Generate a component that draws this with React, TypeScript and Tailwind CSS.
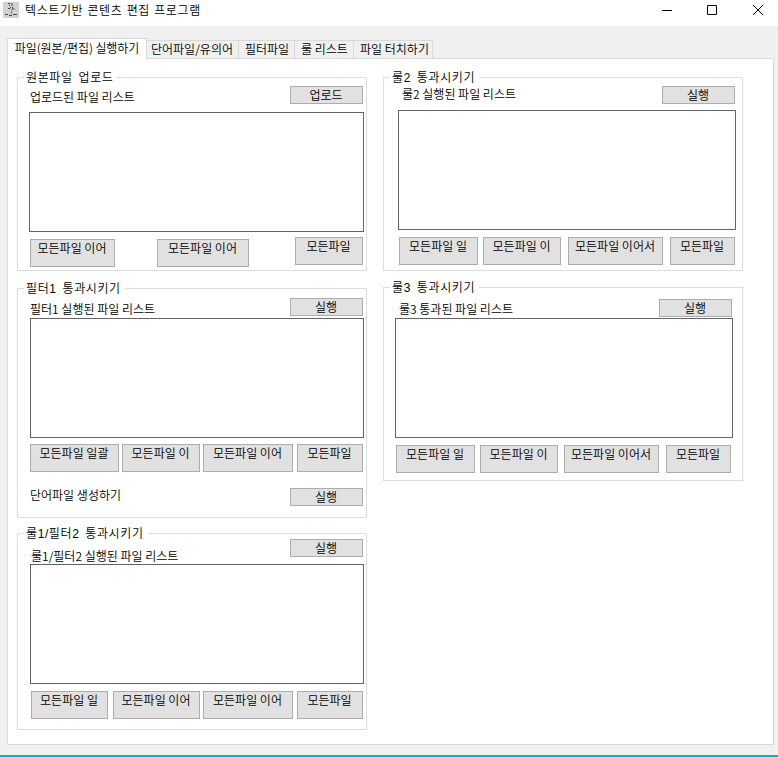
import type { ReactNode } from "react";

function Button({ className, children }: { className: string; children: ReactNode }) {
  return (
    <button
      className={`block shrink-0 border border-[#adadad] bg-[#e1e1e1] pr-px text-center whitespace-nowrap ${className}`}
    >
      {children}
    </button>
  );
}

function Run({ className = "", children = "실행" }: { className?: string; children?: ReactNode }) {
  return <Button className={`h-[18px] w-[73px] leading-[16px] ${className}`}>{children}</Button>;
}

function Batch({ className, children }: { className: string; children: ReactNode }) {
  return <Button className={`h-7 pb-[10px] leading-[16px] ${className}`}>{children}</Button>;
}

function Group({ title, gap, className, children }: { title: string; gap: string; className: string; children: ReactNode }) {
  return (
    <section className={`border border-[#dcdcdc] ${className}`}>
      <h2
        className={`-mt-[7px] ml-[6px] h-[14px] bg-white pl-[2px] font-['Liberation_Sans','Noto_Sans_CJK_KR',sans-serif] text-[12px] leading-[14px] tracking-[0.6px] whitespace-nowrap [word-spacing:2px] ${gap}`}
      >
        {title}
      </h2>
      {children}
    </section>
  );
}

function FileList({ className }: { className: string }) {
  return <div className={`h-[120px] border border-[#646464] bg-white ${className}`} />;
}

function Label({ className = "", children }: { className?: string; children: ReactNode }) {
  return <span className={`h-[14px] leading-[14px] whitespace-nowrap ${className}`}>{children}</span>;
}

const tab = "h-[18px] border-t border-r border-[#d9d9d9] text-center leading-[16px] whitespace-nowrap";

export default function App() {
  return (
    <div className="flex h-[757px] w-[778px] flex-col overflow-hidden border-b-2 border-[#0aaccf] bg-[#f0f0f0] font-['Noto_Sans_CJK_KR',sans-serif] text-[12px] font-[350] text-black">
      <header className="flex h-[26px] shrink-0 items-start bg-white">
        <svg className="mt-[2px] ml-[3px]" width="16" height="16" viewBox="0 0 16 16">
          <rect width="16" height="16" fill="#d2d2d2" />
          <path d="M5 1.5h2M6 3.5h1M9 1v3M5 6.5h2M7 5.500h1M9.500 5v2h2M2 12.500h3M6 13.500h3M10 12.500h4" stroke="#444" fill="none" />
          <path d="M8.500 7v5" stroke="#c87860" />
        </svg>
        <h1 className="ml-[6px] pt-[2px] text-[12px] leading-[16px] tracking-[0.6px] [word-spacing:1px]">
          텍스트기반 콘텐츠 편집 프로그램
        </h1>
        <svg className="mt-[5px] mr-[15px] ml-auto" width="101" height="10" viewBox="0 0 101 10" fill="none" stroke="#000">
          <path d="M0 5.5h10M45.5.5h9v9h-9zM91 0l10 10M101 0l-10 10" />
        </svg>
      </header>

      <nav className="z-10 mt-3 -mb-px flex h-[21px] shrink-0 items-end pl-[7px]">
        <div className="h-[21px] w-[140px] border border-b-0 border-[#d9d9d9] bg-white text-center leading-[17px] tracking-[-0.1px] whitespace-nowrap">
          파일(원본/편집) 실행하기
        </div>
        <div className="mb-px flex">
          <div className={`w-[92px] pr-px ${tab}`}>단어파일/유의어</div>
          <div className={`w-[56px] pl-px ${tab}`}>필터파일</div>
          <div className={`w-[59px] pl-px ${tab}`}>룰 리스트</div>
          <div className={`w-[79px] pl-[3px] ${tab}`}>파일 터치하기</div>
        </div>
      </nav>

      <main className="ml-[7px] flex h-[687px] w-[767px] shrink-0 items-start gap-4 border border-[#d9d9d9] bg-white pt-[18px] pl-[9px]">
        <div className="flex w-[350px] flex-col">
          <Group title="원본파일 업로드" gap="w-[93px]" className="h-[194px]">
            <div className="flex h-[27px] items-start justify-between pr-[3px] pl-3">
              <Label className="mt-[5px]">업로드된 파일 리스트</Label>
              <Run className="mt-px">업로드</Run>
            </div>
            <FileList className="ml-[11px] w-[335px]" />
            <div className="mt-[5px] flex items-start pl-3">
              <Batch className="mt-[2px] w-[85px]">모든파일 이어</Batch>
              <Batch className="mt-[2px] ml-[42px] w-[92px]">모든파일 이어</Batch>
              <Batch className="ml-[46px] w-[68px]">모든파일</Batch>
            </div>
          </Group>

          <Group title="필터1 통과시키기" gap="w-[101px]" className="mt-[17px] h-[230px]">
            <div className="flex h-[22px] items-start justify-between pr-[3px] pl-3">
              <Label className="mt-[6px]">필터1 실행된 파일 리스트</Label>
              <Run className="mt-[2px]" />
            </div>
            <FileList className="ml-3 w-[334px]" />
            <div className="mt-[6px] flex pl-3">
              <Batch className="w-[89px]">모든파일 일괄</Batch>
              <Batch className="ml-[3px] w-[78px]">모든파일 이</Batch>
              <Batch className="ml-[3px] w-[90px]">모든파일 이어</Batch>
              <Batch className="ml-1 w-[66px]">모든파일</Batch>
            </div>
            <div className="mt-4 flex items-start justify-between pr-[3px] pl-3">
              <Label>단어파일 생성하기</Label>
              <Run />
            </div>
          </Group>

          <Group title="룰1/필터2 통과시키기" gap="w-[125px]" className="mt-[15px] h-[197px]">
            <div className="flex h-[23px] items-start justify-between pr-[3px] pl-[13px]">
              <Label className="mt-2">룰1/필터2 실행된 파일 리스트</Label>
              <Run className="-mt-[2px]" />
            </div>
            <FileList className="ml-3 w-[334px]" />
            <div className="mt-[7px] flex pl-[13px]">
              <Batch className="w-[77px]">모든파일 일</Batch>
              <Batch className="ml-[5px] w-[87px]">모든파일 이어</Batch>
              <Batch className="ml-[3px] w-[90px]">모든파일 이어</Batch>
              <Batch className="ml-1 w-[66px]">모든파일</Batch>
            </div>
          </Group>
        </div>

        <div className="flex w-[360px] flex-col">
          <Group title="룰2 통과시키기" gap="w-[89px]" className="h-[194px]">
            <div className="flex h-[25px] items-start justify-between pr-[7px] pl-[18px]">
              <Label className="mt-[2px]">룰2 실행된 파일 리스트</Label>
              <Run className="mt-px" />
            </div>
            <FileList className="ml-[14px] w-[338px]" />
            <div className="mt-[7px] flex pl-[15px]">
              <Batch className="w-[79px]">모든파일 일</Batch>
              <Batch className="ml-[5px] w-[78px]">모든파일 이</Batch>
              <Batch className="ml-[7px] w-[95px]">모든파일 이어서</Batch>
              <Batch className="ml-[7px] w-[65px]">모든파일</Batch>
            </div>
          </Group>

          <Group title="룰3 통과시키기" gap="w-[89px]" className="mt-4 h-[194px]">
            <div className="flex h-[23px] items-start justify-between pr-[10px] pl-[15px]">
              <Label className="mt-[7px]">룰3 통과된 파일 리스트</Label>
              <Run className="mt-1" />
            </div>
            <FileList className="ml-[11px] w-[338px]" />
            <div className="mt-[7px] flex pl-3">
              <Batch className="w-[79px]">모든파일 일</Batch>
              <Batch className="ml-[5px] w-[78px]">모든파일 이</Batch>
              <Batch className="ml-[6px] w-[95px]">모든파일 이어서</Batch>
              <Batch className="ml-[7px] w-[65px]">모든파일</Batch>
            </div>
          </Group>
        </div>
      </main>
    </div>
  );
}
